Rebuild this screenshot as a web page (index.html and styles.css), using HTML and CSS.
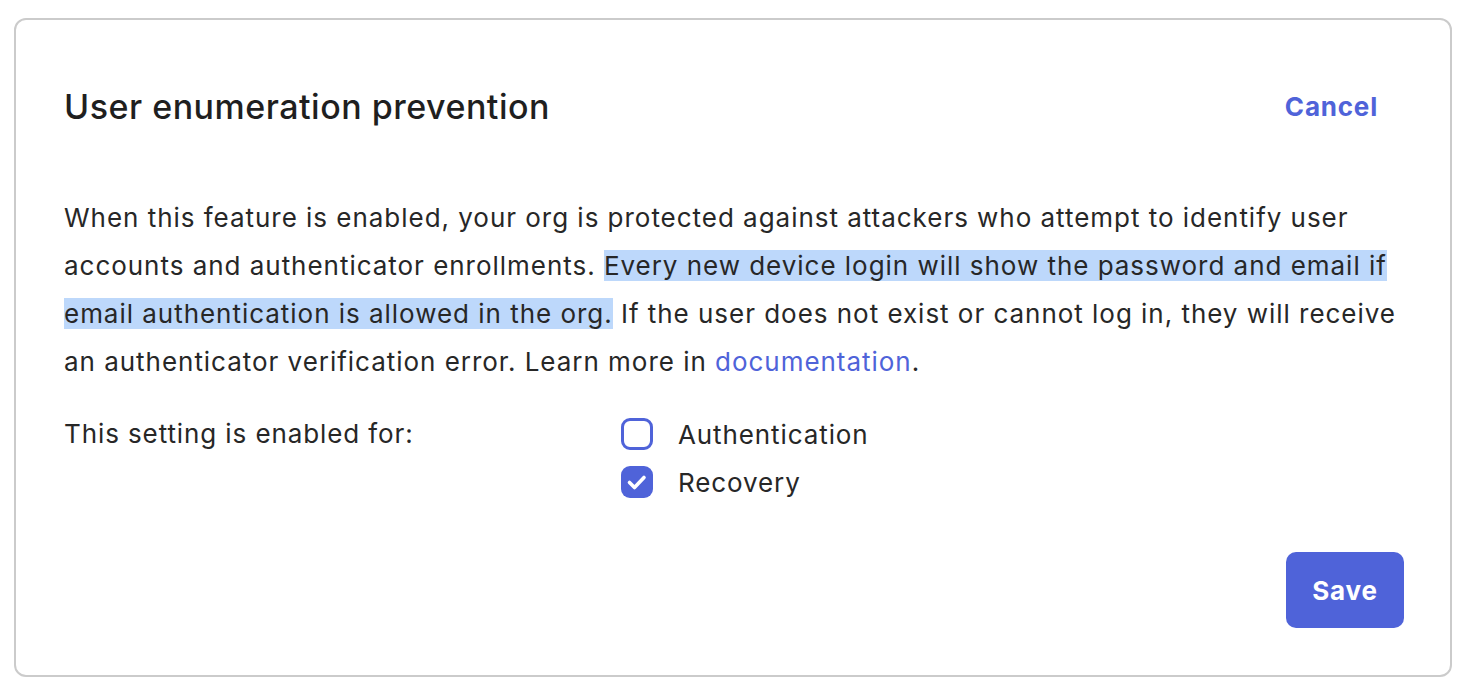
FILE: index.html
```html
<!DOCTYPE html>
<html>
<head>
<meta charset="utf-8">
<link rel="stylesheet" href="styles.css">
</head>
<body>
<section class="card">
  <header class="card-header">
    <h2 class="title">User enumeration prevention</h2>
    <button class="link-btn">Cancel</button>
  </header>
  <p class="desc">When this feature is enabled, your org is protected against attackers who attempt to identify user accounts and authenticator enrollments. <span class="hl">Every new device login will show the password and email if email authentication is allowed in the org.</span> If the user does not exist or cannot log in, they will receive an authenticator verification error. Learn more in <a class="doc-link" href="#">documentation</a>.</p>
  <div class="setting">
    <div class="setting-label">This setting is enabled for:</div>
    <div class="options">
      <label class="option"><span class="box"></span>Authentication</label>
      <label class="option"><span class="box checked"><svg viewBox="0 0 32 32" width="32" height="32"><path d="M8.5 16.5l5 5 9.5-10" fill="none" stroke="#fff" stroke-width="3.6" stroke-linecap="round" stroke-linejoin="round"/></svg></span>Recovery</label>
    </div>
  </div>
  <footer class="card-footer">
    <button class="save-btn">Save</button>
  </footer>
</section>
</body>
</html>
```

FILE: styles.css
```css
* { box-sizing: border-box; }
html, body { margin: 0; padding: 0; background: #fff; }
body {
  font-family: Inter, "Noto Sans", sans-serif;
  color: #272727;
  padding: 18px 18px 17px 14px;
}
.card {
  border: 2px solid #cbcbcb;
  border-radius: 12px;
  height: 659px;
  padding: 0 46px 0 48px;
  display: flex;
  flex-direction: column;
}
.card-header {
  display: flex;
  justify-content: space-between;
  align-items: center;
  margin-top: 66px;
  height: 40px;
}
.title {
  margin: 0;
  font-size: 34px;
  font-weight: 500;
  letter-spacing: 0.5px;
  color: #1f1f1f;
}
.link-btn {
  background: none;
  border: 0;
  font-family: inherit;
  font-size: 26px;
  font-weight: 700;
  letter-spacing: 0.8px;
  color: #4f63d9;
  padding: 0 26px;
  cursor: pointer;
}
.desc {
  margin: 68px 0 0;
  font-size: 26px;
  line-height: 48px;
  letter-spacing: 0.97px;
}
.hl { background: #bdd8fb; }
.doc-link { color: #4f63d9; text-decoration: none; }
.setting {
  display: grid;
  grid-template-columns: 557px 1fr;
  margin-top: 24px;
  font-size: 26px;
  letter-spacing: 0.9px;
}
.setting-label { line-height: 48px; }
.options { display: flex; flex-direction: column; }
.option {
  display: flex;
  align-items: center;
  height: 48px;
  gap: 25px;
}
.box {
  width: 32px;
  height: 32px;
  border: 3px solid #4f63d9;
  border-radius: 9px;
  display: inline-flex;
  align-items: center;
  justify-content: center;
  flex: none;
}
.box.checked { background: #4f63d9; border: 0; }
.card-footer {
  margin-top: auto;
  margin-bottom: 47px;
  display: flex;
  justify-content: flex-end;
}
.save-btn {
  width: 118px;
  height: 76px;
  border: 0;
  border-radius: 10px;
  background: #4f63d9;
  color: #fff;
  font-family: inherit;
  font-size: 26px;
  font-weight: 700;
  letter-spacing: 0.8px;
}
```
